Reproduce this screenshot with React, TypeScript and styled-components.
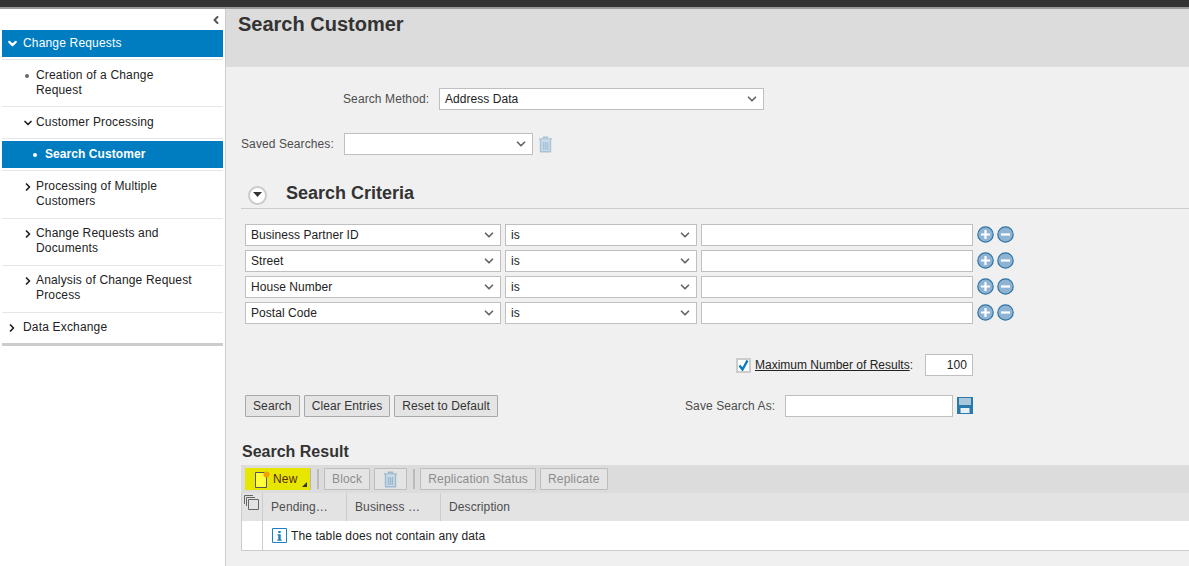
import React from 'react';
import styled, { createGlobalStyle } from 'styled-components';
import { ChevronDown, ChevronRight, ChevronLeft } from 'lucide-react';

const GlobalStyle = createGlobalStyle`
  html, body { margin: 0; padding: 0; height: 100%; overflow: hidden; }
  body { font-family: 'Liberation Sans', Arial, sans-serif; font-size: 12px; letter-spacing: 0.1px; color: #333; background: #f0f0f0; }
  * { box-sizing: border-box; }
`;

const Page = styled.div`
  width: 1189px;
  height: 566px;
  display: flex;
  flex-direction: column;
  overflow: hidden;
`;

const TopBar = styled.div`
  height: 9px;
  flex: none;
  background: #333;
  border-bottom: 2px solid #9a9a9a;
`;

const Body = styled.div`
  flex: 1;
  display: flex;
  min-height: 0;
`;

const Sidebar = styled.nav`
  width: 226px;
  flex: none;
  background: #fff;
  border-right: 1px solid #ccc;
  padding: 0 2px;
  letter-spacing: 0.17px;
`;

const CollapseRow = styled.div`
  height: 21px;
  display: flex;
  justify-content: flex-end;
  align-items: center;
  color: #555;
  padding: 0 1px 0 0;
`;

const NavList = styled.div`
  border-bottom: 3px solid #ccc;
  width: 221px;
  padding-bottom: 8px;
`;

const NavItem = styled.div<{ $active?: boolean; $top?: boolean; $indent: number; $py?: string }>`
  display: flex;
  align-items: ${(p) => (p.$active || p.$top ? 'center' : 'flex-start')};
  background: ${(p) => (p.$active ? '#007cc0' : 'transparent')};
  color: ${(p) => (p.$active ? '#fff' : '#222')};
  font-weight: ${(p) => (p.$active && !p.$top ? 700 : 400)};
  letter-spacing: ${(p) => (p.$active && !p.$top ? '0.07px' : 'inherit')};
  line-height: 15px;
  padding: ${(p) => p.$py ?? '0'};
  padding-left: ${(p) => p.$indent}px;
  height: ${(p) => (p.$active ? '27px' : 'auto')};
`;

const Divider = styled.div<{ $top?: number }>`
  height: 1px;
  background: #e6e6e6;
  margin-top: ${(p) => p.$top ?? 0}px;
`;

const IconSlot = styled.span<{ $w: number }>`
  width: ${(p) => p.$w}px;
  flex: none;
  display: flex;
  align-items: center;
  height: 15px;
`;

const Dot = styled.span<{ $light?: boolean }>`
  width: 4px;
  height: 4px;
  border-radius: 50%;
  background: ${(p) => (p.$light ? '#fff' : '#666')};
`;

const SubActive = styled.div`
  margin-top: 2px;
`;

const Main = styled.main`
  flex: 1;
  min-width: 0;
  display: flex;
  flex-direction: column;
`;

const Header = styled.header`
  height: 58px;
  flex: none;
  background: #dcdcdc;
  padding: 3px 12px;
`;

const Title = styled.h1`
  margin: 0;
  font-size: 20px;
  line-height: 24px;
  font-weight: 700;
  color: #333;
  letter-spacing: 0;
`;

const Content = styled.div`
  padding: 21px 0 0 15px;
`;

const FormLine = styled.div<{ $left?: number; $top?: number }>`
  display: flex;
  align-items: center;
  margin-left: ${(p) => p.$left ?? 0}px;
  margin-top: ${(p) => p.$top ?? 0}px;
`;

const Label = styled.label<{ $w?: number }>`
  color: #4d4d4d;
  width: ${(p) => (p.$w ? `${p.$w}px` : 'auto')};
  flex: none;
`;

const SelectBox = styled.div<{ $w: number }>`
  width: ${(p) => p.$w}px;
  height: 22px;
  flex: none;
  display: flex;
  align-items: center;
  justify-content: space-between;
  background: #fff;
  border: 1px solid #bfbfbf;
  padding: 0 4px 0 5px;
  color: #222;
  letter-spacing: 0.05px;
`;

const TextBox = styled.input<{ $w: number; $right?: boolean }>`
  width: ${(p) => p.$w}px;
  height: 22px;
  flex: none;
  background: #fff;
  border: 1px solid #bfbfbf;
  padding: 0 5px;
  font: inherit;
  letter-spacing: inherit;
  color: #222;
  text-align: ${(p) => (p.$right ? 'right' : 'left')};
`;

const TrashSlot = styled.span`
  margin-left: 5px;
  display: flex;
`;

const SectionHead = styled.div`
  display: flex;
  align-items: center;
  margin-top: 24px;
  height: 30px;
  border-bottom: 1px solid #ccc;
  padding-top: 2px;
`;

const SectionToggle = styled.span`
  width: 19px;
  height: 19px;
  margin: 1px 19px 0 7px;
  border-radius: 50%;
  border: 2px solid #ccc;
  background: #fff;
  display: flex;
  align-items: center;
  justify-content: center;
`;

const SectionTitle = styled.h2`
  margin: 0 0 2px;
  font-size: 18px;
  font-weight: 700;
  color: #333;
  letter-spacing: 0;
`;

const Rows = styled.div`
  margin: 15px 0 0 4px;
  display: flex;
  flex-direction: column;
  gap: 4px;
`;

const CriteriaRow = styled.div`
  display: flex;
  align-items: center;
  gap: 4px;
`;

const RoundButtons = styled.div`
  display: flex;
  gap: 3px;
  margin-top: -1px;
`;

const RoundIcon = styled.svg`
  display: block;
`;

const OptionsLine = styled.div`
  display: flex;
  align-items: center;
  margin: 30px 0 0 495px;
`;

const CheckBox = styled.span`
  width: 15px;
  height: 15px;
  background: #fff;
  border: 2px solid #ccc;
  display: flex;
  align-items: center;
  justify-content: center;
  margin-right: 4px;
`;

const LinkLabel = styled.span`
  color: #333;
  width: 170px;
  flex: none;
  letter-spacing: 0;
`;

const Underlined = styled.span`
  text-decoration: underline;
  color: #222;
`;

const ActionLine = styled.div`
  display: flex;
  align-items: center;
  margin: 19px 0 0 4px;
`;

const Btn = styled.button<{ $disabled?: boolean }>`
  height: 22px;
  padding: 0 7px;
  font: inherit;
  letter-spacing: inherit;
  border: 1px solid ${(p) => (p.$disabled ? '#bdbdbd' : '#a8a8a8')};
  border-radius: 1px;
  background: #e4e4e4;
  color: ${(p) => (p.$disabled ? '#8c8c8c' : '#333')};
  display: flex;
  align-items: center;
  flex: none;
`;

const IconBtn = styled(Btn)`
  width: 33px;
  padding: 0;
  justify-content: center;
`;

const ActionButtons = styled.div`
  display: flex;
  gap: 4px;
  width: 440px;
  flex: none;
`;

const SaveIcon = styled.svg`
  margin: -1px 0 0 4px;
`;

const ResultTitle = styled.h3`
  margin: 25px 0 0 1px;
  font-size: 16px;
  line-height: 19px;
  font-weight: 700;
  color: #333;
  letter-spacing: 0;
`;

const Toolbar = styled.div`
  margin-top: 4px;
  height: 28px;
  background: #dcdcdc;
  display: flex;
  align-items: center;
  gap: 4px;
  padding-left: 4px;
  letter-spacing: 0.17px;
`;

const Separator = styled.span`
  width: 2px;
  height: 20px;
  background: #bbb;
  margin: 0 1px 0 2px;
`;

const NewButton = styled(Btn)`
  width: 66px;
  position: relative;
  background: transparent;
  border-color: #b5b5b5;
  padding-left: 9px;
  color: #5a2a00;
`;

const Highlight = styled.span`
  position: absolute;
  left: -1px;
  top: -1px;
  width: 65px;
  height: 22px;
  background: #e6e600;
`;

const NewContent = styled.span`
  position: relative;
  display: flex;
  align-items: center;
  gap: 1px;
`;

const CornerMark = styled.span`
  position: absolute;
  right: 3px;
  bottom: 2px;
  width: 0;
  height: 0;
  border-left: 5px solid transparent;
  border-bottom: 5px solid #333;
`;

const TableHead = styled.div`
  display: flex;
  height: 28px;
  background: #e3e3e3;
  border-left: 1px solid #ccc;
`;

const SelectCell = styled.div`
  width: 21px;
  flex: none;
  border-right: 1px solid #ccc;
  padding: 2px 0 0 2px;
`;

const HeadCell = styled.div<{ $w?: number }>`
  width: ${(p) => (p.$w ? `${p.$w}px` : 'auto')};
  flex: ${(p) => (p.$w ? 'none' : 1)};
  border-right: ${(p) => (p.$w ? '1px solid #ccc' : 'none')};
  display: flex;
  align-items: center;
  padding-left: 8px;
  color: #4d4d4d;
`;

const TableRow = styled.div`
  display: flex;
  height: 30px;
  background: #fff;
  border-left: 1px solid #ccc;
  border-bottom: 1px solid #ccc;
`;

const EmptyCell = styled.div`
  flex: 1;
  display: flex;
  align-items: center;
  gap: 4px;
  padding-left: 9px;
  color: #222;
`;

const chevron = <ChevronDown size={14} strokeWidth={3} color="#666" />;

const Select = ({ w, value }: { w: number; value?: string }) => (
  <SelectBox $w={w}>
    <span>{value}</span>
    {chevron}
  </SelectBox>
);

const Trash = ({ color = '#a9c3d6' }: { color?: string }) => (
  <svg width="15" height="17" viewBox="0 0 15 17" fill="none" stroke={color} strokeWidth="1.4">
    <path d="M1 3h13M5.5 3V1.2h4V3" />
    <path d="M2.5 3.5v12.3h10V3.5" fill="#c9dbe8" />
    <path d="M5.5 6v8M7.5 6v8M9.5 6v8" />
  </svg>
);

const Round = ({ minus }: { minus?: boolean }) => (
  <RoundIcon width="17" height="17" viewBox="0 0 17 17">
    <circle cx="8.5" cy="8.5" r="7.7" fill="#8fb3d3" stroke="#2f74a5" strokeWidth="1.2" />
    <path d={minus ? 'M4 8.5h9' : 'M4 8.5h9M8.5 4v9'} stroke="#fff" strokeWidth="2.2" />
  </RoundIcon>
);

const criteria = ['Business Partner ID', 'Street', 'House Number', 'Postal Code'];

export default function App() {
  return (
    <Page>
      <GlobalStyle />
      <TopBar />
      <Body>
        <Sidebar>
          <CollapseRow>
            <ChevronLeft size={12} strokeWidth={4} />
          </CollapseRow>
          <NavList>
            <NavItem $active $top $indent={4}>
              <IconSlot $w={17}><ChevronDown size={13} strokeWidth={4} /></IconSlot>
              Change Requests
            </NavItem>
            <Divider $top={2} />
            <NavItem $indent={23} $py="8px 0">
              <IconSlot $w={11}><Dot /></IconSlot>
              <span>Creation of a Change<br />Request</span>
            </NavItem>
            <Divider />
            <NavItem $indent={20} $py="8px 0">
              <IconSlot $w={14}><ChevronDown size={12} strokeWidth={3.5} /></IconSlot>
              Customer Processing
            </NavItem>
            <Divider />
            <SubActive>
              <NavItem $active $indent={31}>
                <IconSlot $w={12}><Dot $light /></IconSlot>
                Search Customer
              </NavItem>
            </SubActive>
            <Divider $top={2} />
            <NavItem $indent={20} $py="8px 0 9px">
              <IconSlot $w={14}><ChevronRight size={12} strokeWidth={3.5} /></IconSlot>
              <span>Processing of Multiple<br />Customers</span>
            </NavItem>
            <Divider />
            <NavItem $indent={20} $py="7px 0 9px">
              <IconSlot $w={14}><ChevronRight size={12} strokeWidth={3.5} /></IconSlot>
              <span>Change Requests and<br />Documents</span>
            </NavItem>
            <Divider />
            <NavItem $indent={20} $py="7px 0 9px">
              <IconSlot $w={14}><ChevronRight size={12} strokeWidth={3.5} /></IconSlot>
              <span>Analysis of Change Request<br />Process</span>
            </NavItem>
            <Divider />
            <NavItem $indent={4} $py="7px 0 0">
              <IconSlot $w={17}><ChevronRight size={12} strokeWidth={3.5} /></IconSlot>
              Data Exchange
            </NavItem>
          </NavList>
        </Sidebar>
        <Main>
          <Header>
            <Title>Search Customer</Title>
          </Header>
          <Content>
            <FormLine $left={102}>
              <Label $w={96}>Search Method:</Label>
              <Select w={325} value="Address Data" />
            </FormLine>
            <FormLine $top={23}>
              <Label $w={103}>Saved Searches:</Label>
              <Select w={189} />
              <TrashSlot><Trash /></TrashSlot>
            </FormLine>
            <SectionHead>
              <SectionToggle>
                <svg width="9" height="6" viewBox="0 0 9 6"><path d="M0 0h9L4.5 5z" fill="#333" /></svg>
              </SectionToggle>
              <SectionTitle>Search Criteria</SectionTitle>
            </SectionHead>
            <Rows>
              {criteria.map((c) => (
                <CriteriaRow key={c}>
                  <Select w={256} value={c} />
                  <Select w={192} value="is" />
                  <TextBox $w={272} readOnly />
                  <RoundButtons>
                    <Round />
                    <Round minus />
                  </RoundButtons>
                </CriteriaRow>
              ))}
            </Rows>
            <OptionsLine>
              <CheckBox>
                <svg width="11" height="11" viewBox="0 0 11 11"><path d="M1.5 5.5l3 4 5-9" fill="none" stroke="#0a7cc0" strokeWidth="2.4" /></svg>
              </CheckBox>
              <LinkLabel><Underlined>Maximum Number of Results</Underlined>:</LinkLabel>
              <TextBox $w={48} $right readOnly value="100" />
            </OptionsLine>
            <ActionLine>
              <ActionButtons>
                <Btn>Search</Btn>
                <Btn>Clear Entries</Btn>
                <Btn>Reset to Default</Btn>
              </ActionButtons>
              <Label $w={100}>Save Search As:</Label>
              <TextBox $w={168} readOnly />
              <SaveIcon width="16" height="17" viewBox="0 0 16 17">
                <path d="M0 0h16v17H0z" fill="#2b78ab" />
                <path d="M2 1h12v7H2z" fill="#a9c8de" />
                <path d="M3.5 11h9v5h-9z" fill="#e6f0f7" />
              </SaveIcon>
            </ActionLine>
            <ResultTitle>Search Result</ResultTitle>
            <Toolbar>
              <NewButton>
                <Highlight />
                <NewContent>
                  <svg width="17" height="17" viewBox="0 0 17 17">
                    <path d="M.5 1.5h11v15H.5z" fill="#ffff3c" stroke="#555" />
                    <circle cx="11.5" cy="3.5" r="3" fill="#f5a000" />
                  </svg>
                  New
                </NewContent>
                <CornerMark />
              </NewButton>
              <Separator />
              <Btn $disabled>Block</Btn>
              <IconBtn $disabled><Trash color="#9cb9cd" /></IconBtn>
              <Separator />
              <Btn $disabled>Replication Status</Btn>
              <Btn $disabled>Replicate</Btn>
            </Toolbar>
            <TableHead>
              <SelectCell>
                <svg width="16" height="16" viewBox="0 0 16 16" fill="none" stroke="#666">
                  <path d="M4.5 4.5h10v10h-10z" />
                  <path d="M2.5 11V2.5H11M.5 9V.5H9" />
                </svg>
              </SelectCell>
              <HeadCell $w={84}>Pending…</HeadCell>
              <HeadCell $w={94}>Business …</HeadCell>
              <HeadCell>Description</HeadCell>
            </TableHead>
            <TableRow>
              <SelectCell />
              <EmptyCell>
                <svg width="15" height="15" viewBox="0 0 15 15">
                  <path d="M.5.5h14v14H.5z" fill="#fff" stroke="#1b7fc0" />
                  <path d="M6.3 3h2.4v2H6.3zM5.5 6.3h3.2v5.2h1v1.3h-4.4v-1.3h1v-3.9h-.8z" fill="#1b7fc0" />
                </svg>
                The table does not contain any data
              </EmptyCell>
            </TableRow>
          </Content>
        </Main>
      </Body>
    </Page>
  );
}
